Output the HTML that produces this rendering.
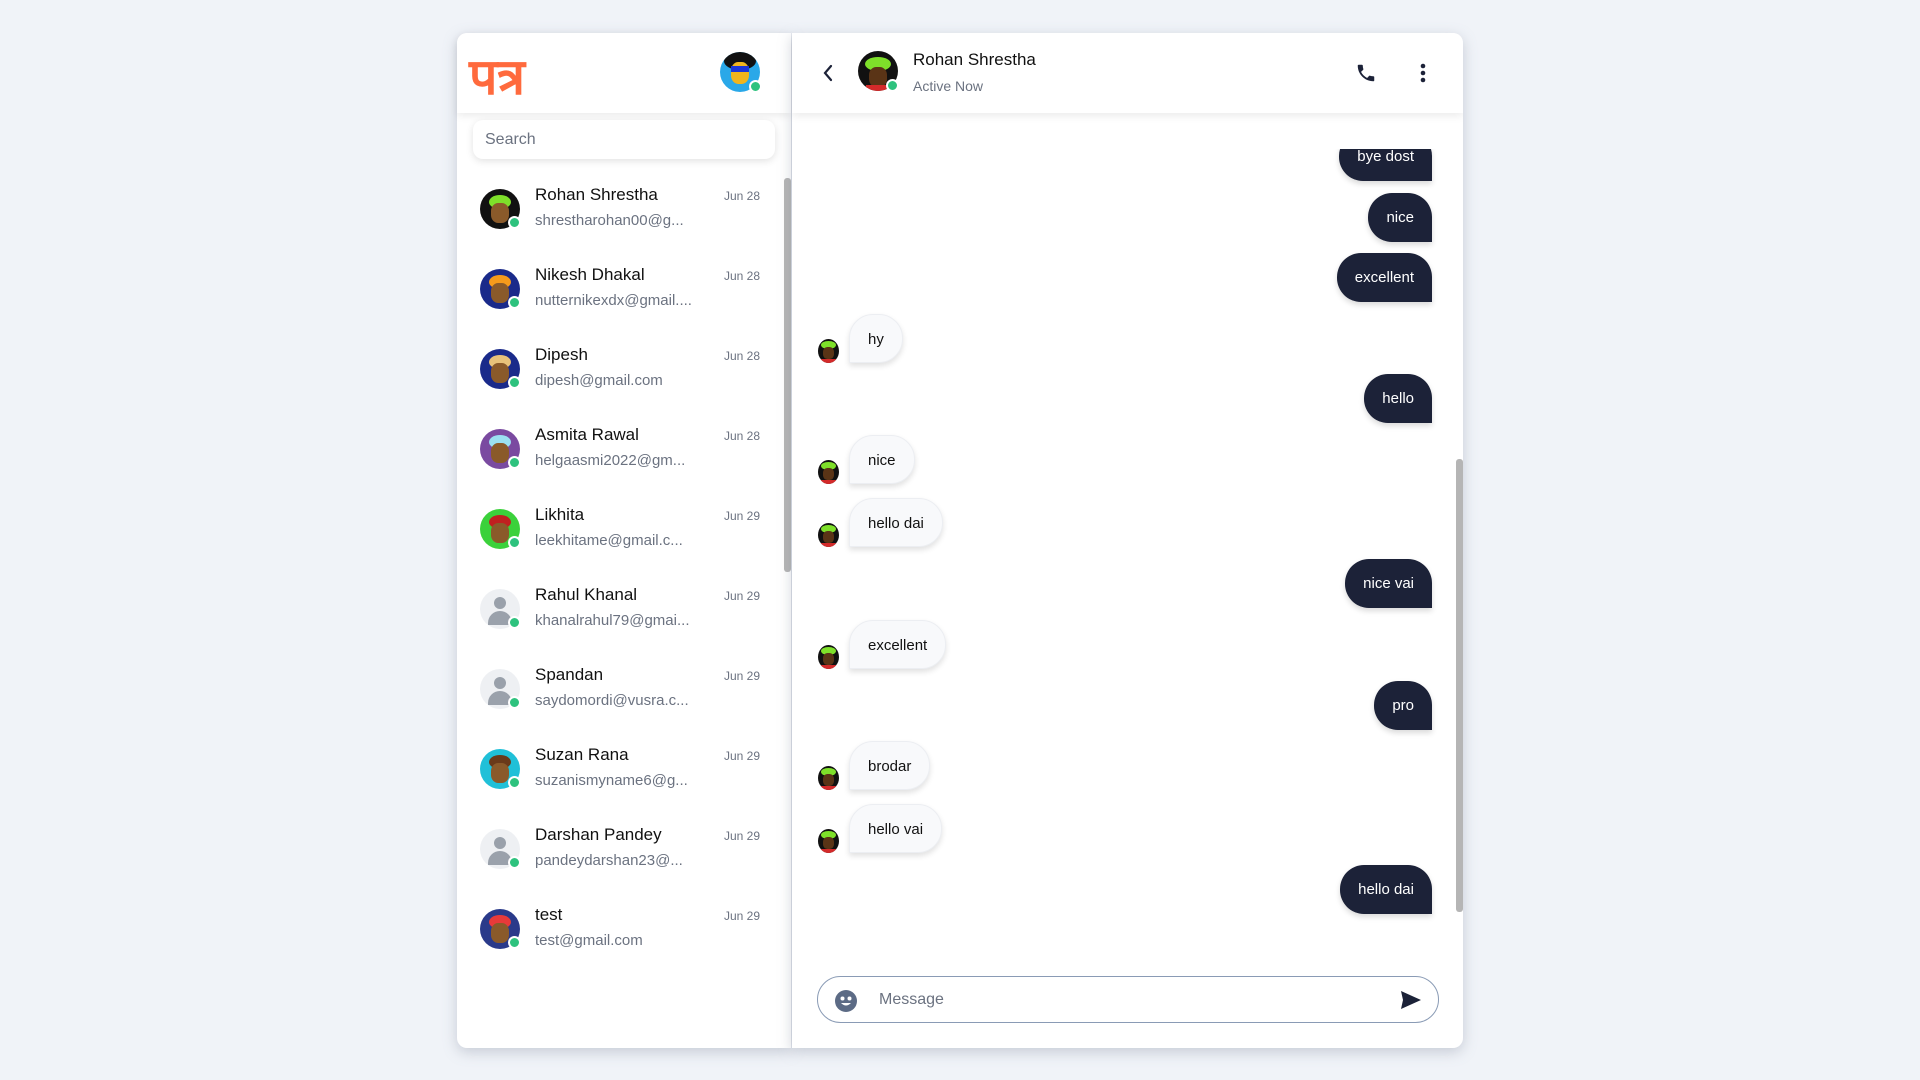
<!DOCTYPE html>
<html><head><meta charset="utf-8"><style>
*{box-sizing:border-box;margin:0;padding:0}
body{width:1920px;height:1080px;background:#f0f3f8;font-family:"Liberation Sans",sans-serif;position:relative;overflow:hidden}
.abs{position:absolute}
.left{left:457px;top:33px;width:334px;height:1015px;background:#fff;border-radius:10px 0 0 10px;box-shadow:0 4px 14px rgba(120,130,150,.35)}
.right{left:792px;top:33px;width:671px;height:1015px;background:#fff;border-radius:0 10px 10px 0;box-shadow:0 4px 14px rgba(120,130,150,.35);overflow:hidden}
.hdr{left:0;top:0;width:100%;height:80px;background:#fff;box-shadow:0 3px 8px rgba(0,0,0,.08)}
.av{border-radius:50%;overflow:hidden}
.dot{width:13px;height:13px;border-radius:50%;background:#2ec27e;border:2px solid #fff}
.name{font-size:17px;color:#111}
.mail{font-size:15px;color:#6b7280}
.date{font-size:12px;color:#6b7280}
.b{position:absolute;height:49px;line-height:49px;font-size:15px;padding:0 18px;border-radius:24px}
.s{background:#1c2238;color:#fff;border-bottom-right-radius:0;right:20px;box-shadow:0 3px 6px rgba(0,0,0,.15)}
.r{background:#f8f9fb;color:#111;border-bottom-left-radius:0;left:57px;box-shadow:0 3px 6px rgba(0,0,0,.12);border:1px solid #eceef2}
.mav{position:absolute;left:26px;width:21px;height:24px;border-radius:50%;background:#111;overflow:hidden}
</style></head><body>

<div class="abs left">
  <div class="abs hdr" style="border-radius:10px 0 0 0">
    <div class="abs" style="left:12px;top:4px;font-family:'Noto Serif CJK SC',serif;font-size:50px;font-weight:bold;color:#ff6a3d">पत्र</div>
    <div class="abs av" style="left:263px;top:19px;width:40px;height:40px;background:#2aa8e8">
      <div class="abs" style="left:4px;top:0;width:32px;height:18px;background:#111;border-radius:50%"></div>
      <div class="abs" style="left:11px;top:10px;width:18px;height:22px;background:#f2b51c;border-radius:40%"></div>
      <div class="abs" style="left:11px;top:14px;width:18px;height:6px;background:#1c36d8"></div>
    </div>
    <div class="abs dot" style="left:292px;top:47px"></div>
  </div>
  <div class="abs" style="left:16px;top:87px;width:302px;height:39px;background:#fff;border-radius:10px;box-shadow:0 2px 8px rgba(0,0,0,.12);font-size:16px;color:#6b7280;padding:11px 12px">Search</div>
  <div class="abs" style="left:327px;top:145px;width:7px;height:394px;background:#b5b5b5;border-radius:3px"></div>
  <div id="list"></div>
</div>

<div class="abs right">
  <div class="abs" style="left:664px;top:426px;width:7px;height:453px;background:#b5b5b5;border-radius:3px"></div>
  <div class="abs" style="left:0;top:116px;width:660px;height:840px;overflow:hidden">
    <div id="msgs" class="abs" style="left:0;top:-116px;width:660px;height:1000px"></div>
  </div>
  <div class="abs hdr" style="z-index:2">
    <svg class="abs" style="left:29px;top:30px" width="14" height="20" viewBox="0 0 14 20"><path d="M10 3 L4 10 L10 17" stroke="#1c2238" stroke-width="2.2" fill="none" stroke-linecap="round"/></svg>
    <div class="abs av" style="left:66px;top:18px;width:40px;height:40px;background:#111">
      <div class="abs" style="left:7px;top:6px;width:26px;height:14px;background:#7ee02a;border-radius:50%"></div>
      <div class="abs" style="left:11px;top:16px;width:18px;height:20px;background:#5a3416;border-radius:40%"></div>
      <div class="abs" style="left:8px;top:34px;width:24px;height:8px;background:#d32a2a"></div>
    </div>
    <div class="abs dot" style="left:94px;top:46px"></div>
    <div class="abs name" style="left:121px;top:17px">Rohan Shrestha</div>
    <div class="abs mail" style="left:121px;top:45px;font-size:14px">Active Now</div>
    <svg class="abs" style="left:563px;top:29px" width="22" height="22" viewBox="0 0 24 24"><path fill="#1c2238" d="M6.6 10.8c1.4 2.8 3.8 5.1 6.6 6.6l2.2-2.2c.3-.3.7-.4 1-.2 1.1.4 2.300.6 3.6.6.6 0 1 .4 1 1V20c0 .6-.4 1-1 1C10.6 21 3 13.4 3 4c0-.6.4-1 1-1h3.5c.6 0 1 .4 1 1 0 1.3.2 2.5.6 3.6.1.3 0 .7-.2 1z"/></svg>
    <svg class="abs" style="left:627px;top:29px" width="8" height="22" viewBox="0 0 8 22"><circle cx="4" cy="4" r="2.3" fill="#1c2238"/><circle cx="4" cy="11" r="2.3" fill="#1c2238"/><circle cx="4" cy="18" r="2.3" fill="#1c2238"/></svg>
  </div>
  <div class="abs" style="left:25px;top:943px;width:622px;height:47px;border:1px solid #8a9bb5;border-radius:24px;background:#fff">
    <svg class="abs" style="left:16px;top:12px" width="24" height="24" viewBox="0 0 24 24"><circle cx="12" cy="12" r="11" fill="#5c6b85"/><path d="M7 14 Q12 19 17 14Z" fill="#fff"/><circle cx="8.5" cy="9.5" r="2" fill="#fff"/><circle cx="15.5" cy="9.5" r="2" fill="#fff"/></svg>
    <div class="abs" style="left:61px;top:14px;font-size:16px;color:#6b7280">Message</div>
    <svg class="abs" style="left:582px;top:13px" width="22" height="20" viewBox="0 0 22 20"><path d="M1 1 L21 10 L1 19 L3 10Z" fill="#1c2238"/></svg>
  </div>
</div>

<script>
var L=[["Rohan Shrestha","shrestharohan00@g...","Jun 28","#111","#7ee02a"],["Nikesh Dhakal","nutternikexdx@gmail....","Jun 28","#1a2a8a","#f59a1c"],["Dipesh","dipesh@gmail.com","Jun 28","#1a2a8a","#e8c27a"],["Asmita Rawal","helgaasmi2022@gm...","Jun 28","#7a4aa0","#9be0f0"],["Likhita","leekhitame@gmail.c...","Jun 29","#3bd13b","#c02020"],["Rahul Khanal","khanalrahul79@gmai...","Jun 29","g"],["Spandan","saydomordi@vusra.c...","Jun 29","g"],["Suzan Rana","suzanismyname6@g...","Jun 29","#20c0d8","#6a3a1a"],["Darshan Pandey","pandeydarshan23@...","Jun 29","g"],["test","test@gmail.com","Jun 29","#2a3a8a","#e83a3a"]];
var h="";
L.forEach(function(u,i){var t=143+i*80;
var av=u[3]=="g"?'<div class="abs av" style="left:23px;top:'+(t+13)+'px;width:40px;height:40px;background:#eef0f3"><div class="abs" style="left:14px;top:8px;width:12px;height:12px;border-radius:50%;background:#9aa1ab"></div><div class="abs" style="left:8px;top:22px;width:24px;height:14px;border-radius:12px 12px 0 0;background:#9aa1ab"></div></div>'
:'<div class="abs av" style="left:23px;top:'+(t+13)+'px;width:40px;height:40px;background:'+u[3]+'"><div class="abs" style="left:9px;top:6px;width:22px;height:14px;background:'+u[4]+';border-radius:50%"></div><div class="abs" style="left:11px;top:14px;width:18px;height:20px;background:#8a5a2a;border-radius:40%"></div></div>';
h+=av+'<div class="abs dot" style="left:51px;top:'+(t+40)+'px"></div><div class="abs name" style="left:78px;top:'+(t+9)+'px">'+u[0]+'</div><div class="abs mail" style="left:78px;top:'+(t+36)+'px">'+u[1]+'</div><div class="abs date" style="right:31px;top:'+(t+13)+'px">'+u[2]+'</div>';});
document.getElementById("list").innerHTML=h;
var M=[["s","bye dost",156],["s","nice",217],["s","excellent",277],["r","hy",338],["s","hello",398],["r","nice",459],["r","hello dai",522],["s","nice vai",583],["r","excellent",644],["s","pro",705],["r","brodar",765],["r","hello vai",828],["s","hello dai",889]];
var m="";
M.forEach(function(x){var top=x[2]-24-33;
m+='<div class="b '+x[0]+'" style="top:'+top+'px">'+x[1]+'</div>';
if(x[0]=="r")m+='<div class="mav" style="top:'+(top+25)+'px"><div class="abs" style="left:3px;top:2px;width:15px;height:8px;background:#7ee02a;border-radius:50%"></div><div class="abs" style="left:5px;top:8px;width:11px;height:12px;background:#5a3416;border-radius:40%"></div><div class="abs" style="left:3px;top:20px;width:15px;height:4px;background:#d32a2a"></div></div>';});
document.getElementById("msgs").innerHTML=m;
</script>
</body></html>
